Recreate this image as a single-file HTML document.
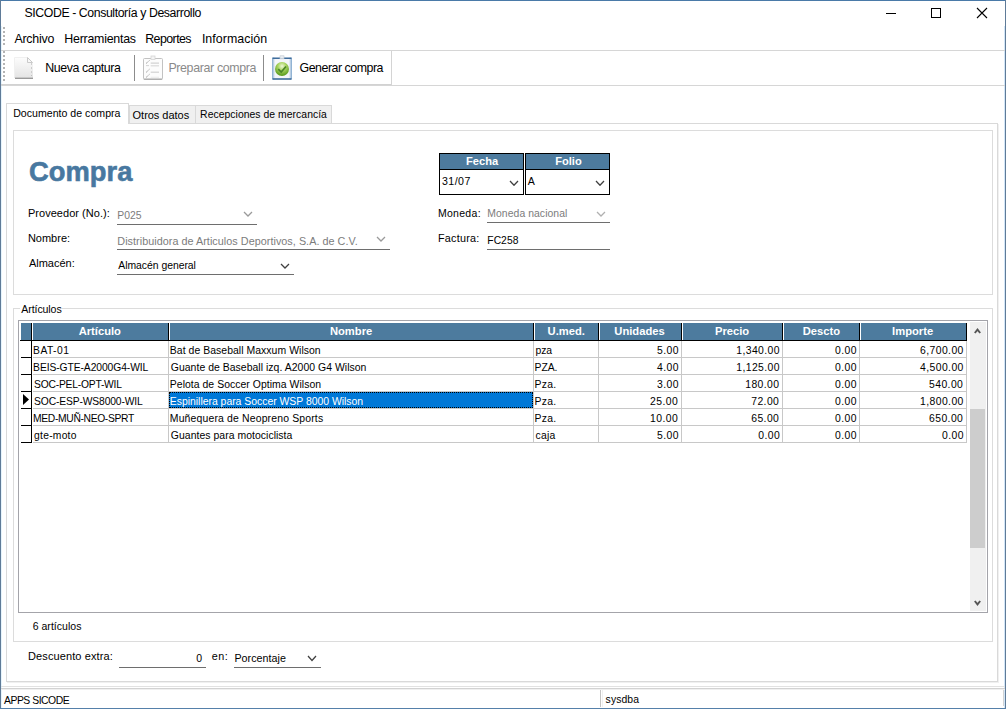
<!DOCTYPE html>
<html><head><meta charset="utf-8"><title>SICODE</title>
<style>
html,body{margin:0;padding:0;}
body{width:1006px;height:709px;position:relative;overflow:hidden;background:#fff;font-family:"Liberation Sans",sans-serif;}
.t{position:absolute;white-space:nowrap;line-height:20px;height:20px;}
.r{position:absolute;}
</style></head><body>
<div class="r" style="left:0px;top:0px;width:1006px;height:1px;background:#4a7aa8;"></div>
<div class="r" style="left:0px;top:0px;width:1px;height:709px;background:#5f7b98;"></div>
<div class="r" style="left:1005px;top:0px;width:1px;height:709px;background:#5f7b98;"></div>
<div class="r" style="left:1004px;top:26px;width:1px;height:682px;background:#d2e6f8;"></div>
<div class="r" style="left:1px;top:26px;width:1px;height:682px;background:#e6f4fc;"></div>
<div class="r" style="left:0px;top:708px;width:1006px;height:1px;background:#5580aa;"></div>
<div class="t" style="left:24.50px;top:2.94px;font-size:12.3px;color:#000;letter-spacing:-0.412px;">SICODE - Consultoría y Desarrollo</div>
<div class="r" style="left:886px;top:13px;width:10px;height:1px;background:#000;"></div>
<div class="r" style="left:931px;top:8px;width:10px;height:10px;border:1px solid #000;box-sizing:border-box;"></div>
<svg class="r" style="left:976px;top:7px" width="12" height="12"><path d="M1 1 L11 11 M11 1 L1 11" stroke="#000" stroke-width="1.1"/></svg>
<div class="r" style="left:3px;top:27px;width:2px;height:2px;background:#b4b4b4;"></div>
<div class="r" style="left:3px;top:31px;width:2px;height:2px;background:#b4b4b4;"></div>
<div class="r" style="left:3px;top:35px;width:2px;height:2px;background:#b4b4b4;"></div>
<div class="r" style="left:3px;top:39px;width:2px;height:2px;background:#b4b4b4;"></div>
<div class="r" style="left:3px;top:43px;width:2px;height:2px;background:#b4b4b4;"></div>
<div class="t" style="left:14.40px;top:28.70px;font-size:12.4px;color:#000;letter-spacing:-0.217px;">Archivo</div>
<div class="t" style="left:64.30px;top:28.70px;font-size:12.4px;color:#000;letter-spacing:-0.245px;">Herramientas</div>
<div class="t" style="left:145.20px;top:28.70px;font-size:12.4px;color:#000;letter-spacing:-0.557px;">Reportes</div>
<div class="t" style="left:201.90px;top:28.70px;font-size:12.4px;color:#000;letter-spacing:0.040px;">Información</div>
<div class="r" style="left:1px;top:50px;width:1004px;height:1px;background:#d6d6d6;"></div>
<div class="r" style="left:3px;top:51px;width:2px;height:2px;background:#b4b4b4;"></div>
<div class="r" style="left:3px;top:55px;width:2px;height:2px;background:#b4b4b4;"></div>
<div class="r" style="left:3px;top:59px;width:2px;height:2px;background:#b4b4b4;"></div>
<div class="r" style="left:3px;top:63px;width:2px;height:2px;background:#b4b4b4;"></div>
<div class="r" style="left:3px;top:67px;width:2px;height:2px;background:#b4b4b4;"></div>
<div class="r" style="left:3px;top:71px;width:2px;height:2px;background:#b4b4b4;"></div>
<div class="r" style="left:3px;top:75px;width:2px;height:2px;background:#b4b4b4;"></div>
<div class="r" style="left:3px;top:79px;width:2px;height:2px;background:#b4b4b4;"></div>
<div class="r" style="left:1px;top:84px;width:391px;height:1px;background:#d2d2d2;"></div>
<div class="r" style="left:1px;top:85px;width:1004px;height:1px;background:#d6d6d6;"></div>
<svg class="r" style="left:13px;top:56px" width="22" height="24">
<defs><linearGradient id="pg" x1="0" y1="0" x2="0" y2="1"><stop offset="0" stop-color="#fdfdfd"/><stop offset="1" stop-color="#e4e4e4"/></linearGradient></defs>
<path d="M1 1 H14 L20 7 V22 H1 Z" fill="url(#pg)"/>
<path d="M1.5 1.5 H14 M1.5 1.5 V21.5" stroke="#f0f0f0" stroke-width="1" fill="none"/>
<path d="M14.5 1.5 L19.5 6.5 L14.5 6.5 Z" fill="#f8f8f8" stroke="#c4c4c4" stroke-width="0.9"/>
<rect x="2" y="21" width="18" height="1" fill="#c8c8c8"/>
<rect x="2" y="22" width="18" height="1" fill="#9a9a9a"/>
<rect x="18" y="7.5" width="1" height="1" fill="#a8a8a8"/><rect x="18" y="11.5" width="1" height="1" fill="#a8a8a8"/><rect x="18" y="15.5" width="1" height="1" fill="#b0b0b0"/><rect x="18" y="19" width="1" height="1" fill="#c0c0c0"/>
</svg>
<div class="t" style="left:45.20px;top:57.90px;font-size:12.4px;color:#000;letter-spacing:-0.408px;">Nueva captura</div>
<div class="r" style="left:134px;top:55px;width:1px;height:26px;background:#8c8c8c;"></div>
<svg class="r" style="left:142px;top:55px" width="22" height="26">
<rect x="1.5" y="3.5" width="19" height="21" rx="1" fill="#fcfcfc" stroke="#c2c2c2" stroke-width="1"/>
<rect x="2" y="23.5" width="18" height="1.2" fill="#a8a8a8"/>
<rect x="9" y="1" width="4" height="3.5" fill="#f4f4f4" stroke="#d4d4d4" stroke-width="0.8"/>
<path d="M4 8.5 L7.5 5.5 M4 17.5 L7.5 14.2 M4 22.5 L7.5 19.3" stroke="#9c9c9c" stroke-width="1" stroke-dasharray="1.2 0.6"/>
<rect x="4" y="10.3" width="3" height="0.8" fill="#c8c8c8"/>
<rect x="8.7" y="7.4" width="8.3" height="1.5" fill="#dadada"/>
<rect x="8.7" y="10.2" width="8.3" height="1.2" fill="#dadada"/>
<rect x="8.7" y="16.5" width="8.3" height="1.5" fill="#dadada"/>
<rect x="8.7" y="21.8" width="8.3" height="0.8" fill="#e4e4e4"/>
</svg>
<div class="t" style="left:168.40px;top:57.90px;font-size:12.4px;color:#8a8a8a;letter-spacing:-0.350px;">Preparar compra</div>
<div class="r" style="left:263px;top:55px;width:1px;height:26px;background:#8c8c8c;"></div>
<svg class="r" style="left:271px;top:55px" width="22" height="26">
<defs><radialGradient id="gb" cx="0.5" cy="0.3" r="0.65"><stop offset="0" stop-color="#eef8d8"/><stop offset="0.45" stop-color="#a8d460"/><stop offset="1" stop-color="#5e9e22"/></radialGradient>
<linearGradient id="cb" x1="0" y1="0" x2="1" y2="0"><stop offset="0" stop-color="#7ea6cc"/><stop offset="0.15" stop-color="#f4f6fa"/><stop offset="0.85" stop-color="#f4f6fa"/><stop offset="1" stop-color="#7ea6cc"/></linearGradient></defs>
<rect x="1" y="2.5" width="20" height="22" rx="1" fill="url(#cb)"/>
<rect x="1.5" y="2.5" width="19" height="1.5" fill="#3f6d9c"/>
<rect x="1.5" y="23.2" width="19" height="1.6" fill="#3f6d9c"/>
<rect x="9" y="0.8" width="4" height="3" fill="#e8ecf0" stroke="#c0c8d0" stroke-width="0.6"/>
<circle cx="11" cy="14" r="7" fill="url(#gb)"/>
<path d="M7.3 14.2 L10.2 17 L15 11.5" fill="none" stroke="#4a8428" stroke-width="1.7"/>
</svg>
<div class="t" style="left:299.50px;top:57.90px;font-size:12.4px;color:#000;letter-spacing:-0.477px;">Generar compra</div>
<div class="r" style="left:391px;top:51px;width:1px;height:34px;background:#d4d4d4;"></div>
<div class="r" style="left:129px;top:105px;width:67px;height:19px;background:#f0f0f0;border:1px solid #d9d9d9;box-sizing:border-box;"></div>
<div class="r" style="left:195px;top:105px;width:137px;height:19px;background:#f0f0f0;border:1px solid #d9d9d9;box-sizing:border-box;"></div>
<div class="r" style="left:6px;top:123px;width:992px;height:559px;background:#fff;border:1px solid #d9d9d9;box-sizing:border-box;"></div>
<div class="r" style="left:998px;top:124px;width:1px;height:559px;background:#f0f0f0;"></div>
<div class="r" style="left:6px;top:103px;width:123px;height:21px;background:#fff;border:1px solid #d9d9d9;box-sizing:border-box;border-bottom:none;"></div>
<div class="t" style="left:13.20px;top:102.92px;font-size:10.6px;color:#000;letter-spacing:0.006px;">Documento de compra</div>
<div class="t" style="left:132.60px;top:104.59px;font-size:11.0px;color:#000;letter-spacing:-0.030px;">Otros datos</div>
<div class="t" style="left:200.10px;top:104.99px;font-size:10.4px;color:#000;letter-spacing:0.039px;">Recepciones de mercancía</div>
<div class="r" style="left:13px;top:130px;width:980px;height:165px;border:1px solid #dcdcdc;box-sizing:border-box;"></div>
<div class="t" style="left:29.10px;top:161.84px;font-size:27.3px;color:#4878a0;font-weight:bold;letter-spacing:0.040px;-webkit-text-stroke:0.6px #4878a0;">Compra</div>
<div class="t" style="left:27.90px;top:203.09px;font-size:11px;color:#000;letter-spacing:0.040px;">Proveedor (No.):</div>
<div class="t" style="left:27.90px;top:228.09px;font-size:11px;color:#000;">Nombre:</div>
<div class="t" style="left:28.90px;top:252.59px;font-size:11px;color:#000;">Almacén:</div>
<div class="t" style="left:117.30px;top:205.99px;font-size:10.4px;color:#7c7c7c;">P025</div>
<div class="r" style="left:117px;top:224px;width:140px;height:1px;background:#6e6e6e;"></div>
<svg class="r" style="left:243px;top:211px" width="10" height="6"><polyline points="1,1 5.0,5 9,1" fill="none" stroke="#9a9a9a" stroke-width="1.25"/></svg>
<div class="t" style="left:117.30px;top:230.86px;font-size:10.8px;color:#7c7c7c;letter-spacing:0.040px;">Distribuidora de Articulos Deportivos, S.A. de C.V.</div>
<div class="r" style="left:117px;top:249px;width:273px;height:1px;background:#6e6e6e;"></div>
<svg class="r" style="left:376px;top:236px" width="10" height="6"><polyline points="1,1 5.0,5 9,1" fill="none" stroke="#9a9a9a" stroke-width="1.25"/></svg>
<div class="t" style="left:118.30px;top:255.79px;font-size:10.4px;color:#000;letter-spacing:-0.029px;">Almacén general</div>
<div class="r" style="left:117px;top:274px;width:177px;height:1px;background:#6e6e6e;"></div>
<svg class="r" style="left:280px;top:262.5px" width="10" height="6.0"><polyline points="1,1 5.0,5.0 9,1" fill="none" stroke="#404040" stroke-width="1.25"/></svg>
<div class="r" style="left:439px;top:153px;width:85px;height:42px;background:#fff;border:1px solid #000;box-sizing:border-box;"></div>
<div class="r" style="left:440px;top:154px;width:83px;height:15px;background:#4d7b9e;"></div>
<div class="r" style="left:439px;top:169px;width:85px;height:1px;background:#000;"></div>
<div class="t" style="left:466.10px;top:151.05px;font-size:11.1px;color:#fff;font-weight:bold;">Fecha</div>
<div class="t" style="left:442.00px;top:171.12px;font-size:10.6px;color:#000;letter-spacing:0.450px;">31/07</div>
<svg class="r" style="left:509px;top:179.5px" width="10" height="6.300000000000011"><polyline points="1,1 5.0,5.300000000000011 9,1" fill="none" stroke="#404040" stroke-width="1.25"/></svg>
<div class="r" style="left:525px;top:153px;width:85px;height:42px;background:#fff;border:1px solid #000;box-sizing:border-box;"></div>
<div class="r" style="left:526px;top:154px;width:83px;height:15px;background:#4d7b9e;"></div>
<div class="r" style="left:525px;top:169px;width:85px;height:1px;background:#000;"></div>
<div class="t" style="left:555.20px;top:151.05px;font-size:11.1px;color:#fff;font-weight:bold;">Folio</div>
<div class="t" style="left:527.80px;top:171.12px;font-size:10.6px;color:#000;">A</div>
<svg class="r" style="left:595px;top:179.5px" width="10" height="6.300000000000011"><polyline points="1,1 5.0,5.300000000000011 9,1" fill="none" stroke="#404040" stroke-width="1.25"/></svg>
<div class="t" style="left:437.90px;top:203.26px;font-size:10.5px;color:#000;letter-spacing:0.300px;">Moneda:</div>
<div class="t" style="left:487.30px;top:203.89px;font-size:10.4px;color:#7c7c7c;letter-spacing:0.064px;">Moneda nacional</div>
<div class="r" style="left:487px;top:222px;width:123px;height:1px;background:#6e6e6e;"></div>
<svg class="r" style="left:596px;top:211px" width="10" height="6"><polyline points="1,1 5.0,5 9,1" fill="none" stroke="#b0b0b0" stroke-width="1.25"/></svg>
<div class="t" style="left:438.00px;top:228.36px;font-size:10.8px;color:#000;letter-spacing:0.243px;">Factura:</div>
<div class="t" style="left:487.30px;top:230.63px;font-size:10.3px;color:#000;letter-spacing:0.050px;">FC258</div>
<div class="r" style="left:487px;top:249px;width:123px;height:1px;background:#6e6e6e;"></div>
<div class="r" style="left:13px;top:308px;width:980px;height:334px;border:1px solid #dcdcdc;box-sizing:border-box;"></div>
<div class="r" style="left:20px;top:302px;width:42px;height:14px;background:#fff;"></div>
<div class="t" style="left:21.30px;top:299.32px;font-size:10.6px;color:#000;letter-spacing:-0.100px;">Artículos</div>
<div class="r" style="left:18px;top:320px;width:970px;height:293px;background:#fff;border:1px solid #a4a4aa;box-sizing:border-box;"></div>
<div class="r" style="left:21px;top:323px;width:946px;height:17px;background:#4d7b9e;"></div>
<div class="r" style="left:20px;top:340px;width:947px;height:1px;background:#000;"></div>
<div class="r" style="left:31px;top:323px;width:1px;height:18px;background:#000;"></div>
<div class="r" style="left:32px;top:323px;width:1px;height:17px;background:#ffffff;"></div>
<div class="r" style="left:168px;top:323px;width:1px;height:18px;background:#000;"></div>
<div class="r" style="left:169px;top:323px;width:1px;height:17px;background:#ffffff;"></div>
<div class="r" style="left:533px;top:323px;width:1px;height:18px;background:#000;"></div>
<div class="r" style="left:534px;top:323px;width:1px;height:17px;background:#ffffff;"></div>
<div class="r" style="left:598px;top:323px;width:1px;height:18px;background:#000;"></div>
<div class="r" style="left:599px;top:323px;width:1px;height:17px;background:#ffffff;"></div>
<div class="r" style="left:681px;top:323px;width:1px;height:18px;background:#000;"></div>
<div class="r" style="left:682px;top:323px;width:1px;height:17px;background:#ffffff;"></div>
<div class="r" style="left:782px;top:323px;width:1px;height:18px;background:#000;"></div>
<div class="r" style="left:783px;top:323px;width:1px;height:17px;background:#ffffff;"></div>
<div class="r" style="left:859px;top:323px;width:1px;height:18px;background:#000;"></div>
<div class="r" style="left:860px;top:323px;width:1px;height:17px;background:#ffffff;"></div>
<div class="r" style="left:966px;top:323px;width:1px;height:18px;background:#000;"></div>
<div class="r" style="left:967px;top:323px;width:1px;height:17px;background:#ffffff;"></div>
<div class="t" style="left:78.70px;top:320.82px;font-size:11.2px;color:#fff;font-weight:bold;">Artículo</div>
<div class="t" style="left:329.95px;top:320.82px;font-size:11.2px;color:#fff;font-weight:bold;">Nombre</div>
<div class="t" style="left:547.60px;top:320.82px;font-size:11.2px;color:#fff;font-weight:bold;">U.med.</div>
<div class="t" style="left:614.35px;top:320.82px;font-size:11.2px;color:#fff;font-weight:bold;">Unidades</div>
<div class="t" style="left:715.00px;top:320.82px;font-size:11.2px;color:#fff;font-weight:bold;">Precio</div>
<div class="t" style="left:802.70px;top:320.82px;font-size:11.2px;color:#fff;font-weight:bold;">Descto</div>
<div class="t" style="left:892.10px;top:320.82px;font-size:11.2px;color:#fff;font-weight:bold;">Importe</div>
<div class="r" style="left:33px;top:357px;width:934px;height:1px;background:#c8c8c8;"></div>
<div class="r" style="left:21px;top:357px;width:10px;height:1px;background:#000;"></div>
<div class="t" style="left:33.10px;top:341.03px;font-size:10.3px;color:#000;letter-spacing:0.440px;">BAT-01</div>
<div class="t" style="left:169.80px;top:340.98px;font-size:10.45px;color:#000;letter-spacing:0.043px;">Bat de Baseball Maxxum Wilson</div>
<div class="t" style="left:535.60px;top:340.99px;font-size:10.4px;color:#000;letter-spacing:-0.150px;">pza</div>
<div class="t" style="left:657.00px;top:340.99px;font-size:10.4px;color:#000;letter-spacing:0.420px;">5.00</div>
<div class="t" style="left:736.20px;top:340.99px;font-size:10.4px;color:#000;letter-spacing:0.420px;">1,340.00</div>
<div class="t" style="left:835.00px;top:340.99px;font-size:10.4px;color:#000;letter-spacing:0.420px;">0.00</div>
<div class="t" style="left:920.00px;top:340.99px;font-size:10.4px;color:#000;letter-spacing:0.420px;">6,700.00</div>
<div class="r" style="left:33px;top:374px;width:934px;height:1px;background:#c8c8c8;"></div>
<div class="r" style="left:21px;top:374px;width:10px;height:1px;background:#000;"></div>
<div class="t" style="left:33.10px;top:358.03px;font-size:10.3px;color:#000;letter-spacing:-0.079px;">BEIS-GTE-A2000G4-WIL</div>
<div class="t" style="left:170.80px;top:357.98px;font-size:10.45px;color:#000;letter-spacing:0.032px;">Guante de Baseball izq. A2000 G4 Wilson</div>
<div class="t" style="left:534.60px;top:357.99px;font-size:10.4px;color:#000;letter-spacing:-0.067px;">PZA.</div>
<div class="t" style="left:657.00px;top:357.99px;font-size:10.4px;color:#000;letter-spacing:0.420px;">4.00</div>
<div class="t" style="left:736.20px;top:357.99px;font-size:10.4px;color:#000;letter-spacing:0.420px;">1,125.00</div>
<div class="t" style="left:835.00px;top:357.99px;font-size:10.4px;color:#000;letter-spacing:0.420px;">0.00</div>
<div class="t" style="left:920.00px;top:357.99px;font-size:10.4px;color:#000;letter-spacing:0.420px;">4,500.00</div>
<div class="r" style="left:33px;top:391px;width:934px;height:1px;background:#c8c8c8;"></div>
<div class="r" style="left:21px;top:391px;width:10px;height:1px;background:#000;"></div>
<div class="t" style="left:34.10px;top:375.03px;font-size:10.3px;color:#000;letter-spacing:-0.221px;">SOC-PEL-OPT-WIL</div>
<div class="t" style="left:169.80px;top:374.98px;font-size:10.45px;color:#000;letter-spacing:0.034px;">Pelota de Soccer Optima Wilson</div>
<div class="t" style="left:534.60px;top:374.99px;font-size:10.4px;color:#000;letter-spacing:0.267px;">Pza.</div>
<div class="t" style="left:657.00px;top:374.99px;font-size:10.4px;color:#000;letter-spacing:0.420px;">3.00</div>
<div class="t" style="left:745.20px;top:374.99px;font-size:10.4px;color:#000;letter-spacing:0.420px;">180.00</div>
<div class="t" style="left:835.00px;top:374.99px;font-size:10.4px;color:#000;letter-spacing:0.420px;">0.00</div>
<div class="t" style="left:929.00px;top:374.99px;font-size:10.4px;color:#000;letter-spacing:0.420px;">540.00</div>
<div class="r" style="left:169px;top:392px;width:364px;height:16px;background:#0078d7;"></div>
<div class="r" style="left:169px;top:392px;width:364px;height:16px;border:1px dotted #000;box-sizing:border-box;"></div>
<div class="r" style="left:33px;top:408px;width:934px;height:1px;background:#c8c8c8;"></div>
<div class="r" style="left:21px;top:408px;width:10px;height:1px;background:#000;"></div>
<div class="t" style="left:34.10px;top:392.03px;font-size:10.3px;color:#000;letter-spacing:-0.141px;">SOC-ESP-WS8000-WIL</div>
<div class="t" style="left:169.80px;top:391.98px;font-size:10.45px;color:#fff;letter-spacing:-0.021px;">Espinillera para Soccer WSP 8000 Wilson</div>
<div class="t" style="left:534.60px;top:391.99px;font-size:10.4px;color:#000;letter-spacing:0.267px;">Pza.</div>
<div class="t" style="left:650.00px;top:391.99px;font-size:10.4px;color:#000;letter-spacing:0.420px;">25.00</div>
<div class="t" style="left:751.20px;top:391.99px;font-size:10.4px;color:#000;letter-spacing:0.420px;">72.00</div>
<div class="t" style="left:835.00px;top:391.99px;font-size:10.4px;color:#000;letter-spacing:0.420px;">0.00</div>
<div class="t" style="left:920.00px;top:391.99px;font-size:10.4px;color:#000;letter-spacing:0.420px;">1,800.00</div>
<div class="r" style="left:33px;top:425px;width:934px;height:1px;background:#c8c8c8;"></div>
<div class="r" style="left:21px;top:425px;width:10px;height:1px;background:#000;"></div>
<div class="t" style="left:33.10px;top:409.03px;font-size:10.3px;color:#000;letter-spacing:-0.340px;">MED-MUÑ-NEO-SPRT</div>
<div class="t" style="left:169.80px;top:408.98px;font-size:10.45px;color:#000;letter-spacing:0.156px;">Muñequera de Neopreno Sports</div>
<div class="t" style="left:534.60px;top:408.99px;font-size:10.4px;color:#000;letter-spacing:0.267px;">Pza.</div>
<div class="t" style="left:650.00px;top:408.99px;font-size:10.4px;color:#000;letter-spacing:0.420px;">10.00</div>
<div class="t" style="left:751.20px;top:408.99px;font-size:10.4px;color:#000;letter-spacing:0.420px;">65.00</div>
<div class="t" style="left:835.00px;top:408.99px;font-size:10.4px;color:#000;letter-spacing:0.420px;">0.00</div>
<div class="t" style="left:929.00px;top:408.99px;font-size:10.4px;color:#000;letter-spacing:0.420px;">650.00</div>
<div class="r" style="left:33px;top:442px;width:934px;height:1px;background:#c8c8c8;"></div>
<div class="r" style="left:21px;top:442px;width:10px;height:1px;background:#000;"></div>
<div class="t" style="left:34.10px;top:426.03px;font-size:10.3px;color:#000;letter-spacing:0.243px;">gte-moto</div>
<div class="t" style="left:170.80px;top:425.98px;font-size:10.45px;color:#000;letter-spacing:0.037px;">Guantes para motociclista</div>
<div class="t" style="left:535.60px;top:425.99px;font-size:10.4px;color:#000;letter-spacing:0.167px;">caja</div>
<div class="t" style="left:657.00px;top:425.99px;font-size:10.4px;color:#000;letter-spacing:0.420px;">5.00</div>
<div class="t" style="left:758.20px;top:425.99px;font-size:10.4px;color:#000;letter-spacing:0.420px;">0.00</div>
<div class="t" style="left:835.00px;top:425.99px;font-size:10.4px;color:#000;letter-spacing:0.420px;">0.00</div>
<div class="t" style="left:942.00px;top:425.99px;font-size:10.4px;color:#000;letter-spacing:0.420px;">0.00</div>
<div class="r" style="left:168px;top:341px;width:1px;height:102px;background:#c8c8c8;"></div>
<div class="r" style="left:533px;top:341px;width:1px;height:102px;background:#c8c8c8;"></div>
<div class="r" style="left:598px;top:341px;width:1px;height:102px;background:#c8c8c8;"></div>
<div class="r" style="left:681px;top:341px;width:1px;height:102px;background:#c8c8c8;"></div>
<div class="r" style="left:782px;top:341px;width:1px;height:102px;background:#c8c8c8;"></div>
<div class="r" style="left:859px;top:341px;width:1px;height:102px;background:#c8c8c8;"></div>
<div class="r" style="left:966px;top:341px;width:1px;height:102px;background:#c8c8c8;"></div>
<div class="r" style="left:31px;top:341px;width:1px;height:102px;background:#000;"></div>
<svg class="r" style="left:23px;top:394px" width="7" height="11"><path d="M0 0 L6 5.5 L0 11 Z" fill="#000"/></svg>
<div class="r" style="left:970px;top:322px;width:16px;height:289px;background:#f0f0f0;"></div>
<div class="r" style="left:970px;top:409px;width:15px;height:139px;background:#cdcdcd;"></div>
<svg class="r" style="left:972px;top:325px" width="12" height="12"><polyline points="2.8,8 5.5,4.6 8.2,8" fill="none" stroke="#555" stroke-width="1.9" stroke-linejoin="miter"/></svg>
<svg class="r" style="left:972px;top:597px" width="12" height="12"><polyline points="2.8,4 5.5,7.4 8.2,4" fill="none" stroke="#555" stroke-width="1.9" stroke-linejoin="miter"/></svg>
<div class="t" style="left:32.70px;top:616.16px;font-size:10.5px;color:#000;letter-spacing:0.030px;">6 artículos</div>
<div class="t" style="left:28.00px;top:645.79px;font-size:11px;color:#000;letter-spacing:0.107px;">Descuento extra:</div>
<div class="r" style="left:119px;top:667px;width:87px;height:1px;background:#6e6e6e;"></div>
<div class="t" style="left:196.30px;top:648.16px;font-size:10.5px;color:#000;">0</div>
<div class="t" style="left:211.80px;top:645.86px;font-size:10.8px;color:#000;letter-spacing:0.450px;">en:</div>
<div class="t" style="left:234.40px;top:648.09px;font-size:10.7px;color:#000;letter-spacing:0.044px;">Porcentaje</div>
<div class="r" style="left:234px;top:667px;width:87px;height:1px;background:#6e6e6e;"></div>
<svg class="r" style="left:307px;top:655px" width="10" height="6.5"><polyline points="1,1 5.0,5.5 9,1" fill="none" stroke="#404040" stroke-width="1.25"/></svg>
<div class="r" style="left:1px;top:686px;width:1004px;height:1px;background:#e2e2e2;"></div>
<div class="r" style="left:1px;top:688px;width:1004px;height:1px;background:#d2d2d2;"></div>
<div class="r" style="left:1px;top:689px;width:1004px;height:1px;background:#f0f0f0;"></div>
<div class="r" style="left:600px;top:690px;width:1px;height:17px;background:#c4c4c4;"></div>
<div class="r" style="left:602px;top:690px;width:1px;height:17px;background:#f0f0f0;"></div>
<div class="r" style="left:1003px;top:690px;width:1px;height:16px;background:#d4d4d4;"></div>
<div class="r" style="left:7px;top:682px;width:992px;height:1px;background:#f0f0f0;"></div>
<div class="t" style="left:4.00px;top:690.79px;font-size:10.4px;color:#000;letter-spacing:-0.480px;">APPS SICODE</div>
<div class="t" style="left:605.60px;top:690.39px;font-size:10.4px;color:#000;letter-spacing:0.100px;">sysdba</div>
</body></html>
